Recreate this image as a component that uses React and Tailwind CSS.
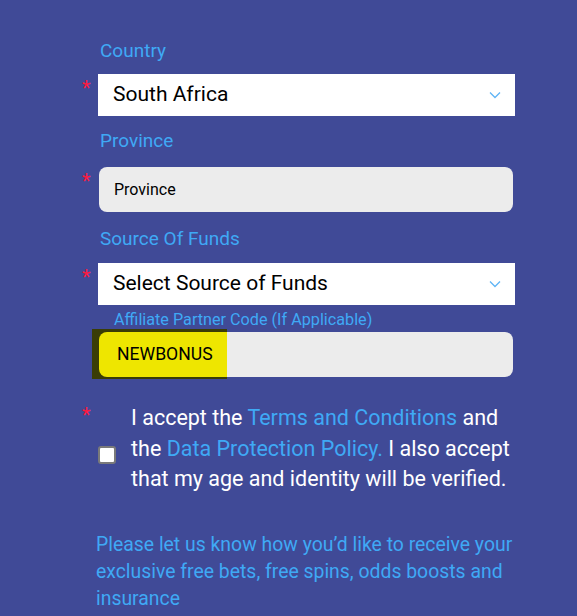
import React from "react";

const Star = ({ className = "" }) => (
  <span className={`w-4 shrink-0 text-[20px] leading-none text-[#ff1a40] ${className}`}>*</span>
);

const Chevron = () => (
  <svg width="12" height="8" viewBox="0 0 12 8" className="absolute right-[14px] top-[17px]">
    <path d="M1 1.5 L6 6.5 L11 1.5" fill="none" stroke="#5fb4f5" strokeWidth="1.3" />
  </svg>
);

const App = () => {
  return (
    <div className="min-h-[616px] w-[577px] overflow-hidden bg-[#404a97] font-['Roboto',sans-serif]">
      <div className="flex flex-col pl-[82px] pt-[39px]">
        {/* Country */}
        <div className="h-6 pl-[18px] text-[19px] leading-6 text-[#3fa9f5]">Country</div>
        <div className="mt-[11px] flex">
          <Star className="mt-[4px]" />
          <div className="relative flex h-[42px] w-[417px] items-center bg-white pl-[15px] text-[21px] text-black">
            South Africa
            <Chevron />
          </div>
        </div>

        {/* Province */}
        <div className="mt-[13px] h-6 pl-[18px] text-[19px] leading-6 text-[#3fa9f5]">Province</div>
        <div className="mt-[14px] flex">
          <Star className="mt-[4px]" />
          <div className="ml-px flex h-[45px] w-[414px] items-center rounded-lg bg-[#ececec] pl-[15px] text-[16px] text-black">
            Province
          </div>
        </div>

        {/* Source of funds */}
        <div className="mt-[15px] h-6 pl-[18px] text-[19px] leading-6 text-[#3fa9f5]">Source Of Funds</div>
        <div className="mt-3 flex">
          <Star className="mt-[4px]" />
          <div className="relative flex h-[42px] w-[417px] items-center bg-white pl-[15px] text-[21px] text-black">
            Select Source of Funds
            <Chevron />
          </div>
        </div>

        {/* Affiliate */}
        <div className="mt-[5px] h-5 pl-[32px] text-[16.2px] leading-5 text-[#3fa9f5]">
          Affiliate Partner Code (If Applicable)
        </div>
        <div className="mt-[2px] flex">
          <div className="w-4 shrink-0" />
          <div className="relative ml-px flex h-[45px] w-[414px] items-center rounded-lg bg-[#ececec]">
            <div className="absolute -left-[7px] -top-[3px] h-[50px] w-[135px] bg-[#3a3d06]" />
            <div className="relative flex h-[45px] w-[128px] items-center rounded-l-lg bg-[#eee600] pl-[18px] text-[17.6px] text-black">
              NEWBONUS
            </div>
          </div>
        </div>

        {/* Terms */}
        <div className="mt-[26px] flex">
          <Star className="mt-[2px]" />
          <div className="flex w-[417px] items-start">
            <div className="mt-[43px] h-[18px] w-[18px] shrink-0 rounded-[3px] border-2 border-[#7a7a7a] bg-white" />
            <p className="ml-[15px] text-[21.5px] leading-[30.5px] text-white">
              I accept the <span className="text-[#3fa9f5]">Terms and Conditions</span> and the{" "}
              <span className="text-[#3fa9f5]">Data Protection Policy.</span> I also accept that my age and
              identity will be verified.
            </p>
          </div>
        </div>

        {/* Marketing */}
        <p className="mt-[36px] ml-[14px] w-[425px] text-[19.4px] leading-[27px] text-[#3fa9f5]">
          Please let us know how you’d like to receive your exclusive free bets, free spins, odds boosts and
          insurance
        </p>
      </div>
    </div>
  );
};

export default App;
